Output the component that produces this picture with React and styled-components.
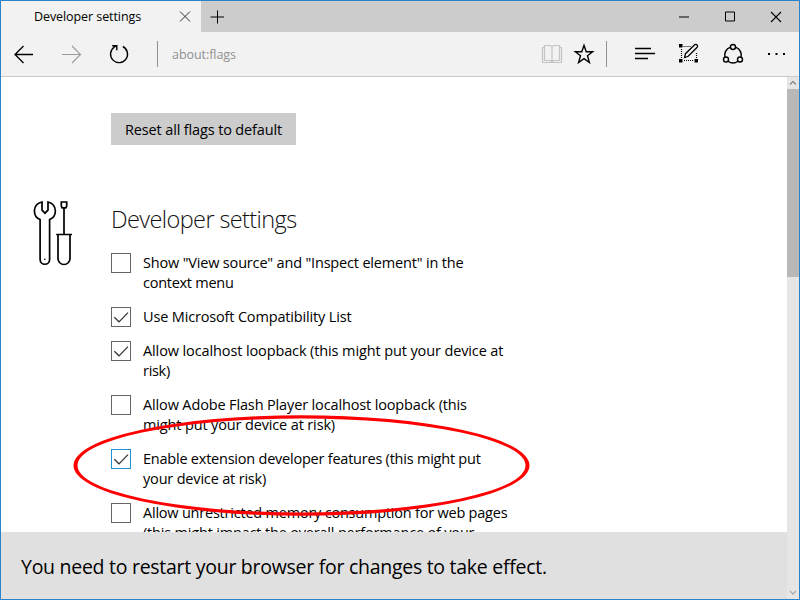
import React from 'react';
import styled, { createGlobalStyle } from 'styled-components';

const GlobalStyle = createGlobalStyle`
  * { box-sizing: border-box; }
  html, body { margin: 0; padding: 0; overflow: hidden; }
  body { font-family: "Open Sans", "Noto Sans", sans-serif; color: #000; }
`;

const Window = styled.div`
  position: relative;
  display: flex;
  flex-direction: column;
  width: 800px;
  height: 600px;
  border: 1px solid #2784cb;
  background: #fff;
`;

const TitleBar = styled.div`
  display: flex;
  flex: 0 0 31px;
  background: #ccc;
`;

const Tab = styled.div`
  display: flex;
  align-items: center;
  justify-content: space-between;
  width: 200px;
  padding: 0 5px 0 33px;
  background: #f2f2f2;
`;

const TabTitle = styled.span`
  font-size: 12.5px;
  line-height: 18px;
  letter-spacing: -0.08px;
  white-space: nowrap;
`;

const Icon = styled.svg`
  display: block;
  flex: none;
  width: ${(p) => p.$w || 24}px;
  height: ${(p) => p.$h || 24}px;
  margin-left: ${(p) => p.$gap || 0}px;
  fill: none;
  stroke: ${(p) => p.$color || '#000'};
  stroke-width: ${(p) => p.$stroke || 1};
`;

const NewTab = styled.div`
  display: flex;
  align-items: center;
  padding-left: 5px;
`;

const WindowControls = styled.div`
  display: flex;
  align-items: center;
  margin-left: auto;
  padding-right: 11px;
`;

const Toolbar = styled.div`
  display: flex;
  flex: 0 0 45px;
  align-items: center;
  padding: 0 10px 0 11px;
  border-bottom: 1px solid #c8c8c8;
  background: #f2f2f2;
`;

const Divider = styled.div`
  width: 1px;
  height: 26px;
  margin-left: ${(p) => p.$gap}px;
  background: #919191;
`;

const Address = styled.div`
  flex: 1;
  padding: 2px 0 0 14px;
  font-size: 12.5px;
  line-height: 18px;
  letter-spacing: -0.06px;
  color: #919191;
`;

const Body = styled.div`
  display: flex;
  flex: 1;
  min-height: 0;
`;

const Viewport = styled.main`
  position: relative;
  display: flex;
  flex-direction: column;
  width: 786px;
  overflow: hidden;
`;

const Page = styled.div`
  flex: 1;
  min-height: 0;
  overflow: hidden;
  padding: 36px 0 0 110px;
`;

const ResetButton = styled.button`
  display: block;
  width: 185px;
  height: 32px;
  padding: 2px 0 0 14px;
  border: 0;
  background: #ccc;
  font: 14.5px/30px "Open Sans", "Noto Sans", sans-serif;
  letter-spacing: -0.14px;
  text-align: left;
  white-space: nowrap;
  color: #000;
`;

const Section = styled.section`
  display: flex;
  margin: 53px 0 0 -80px;
`;

const Settings = styled.div`
  width: 420px;
  margin-left: 32px;
`;

const Heading = styled.h1`
  margin: 4px 0 0;
  font-size: 23.5px;
  font-weight: 300;
  line-height: 34px;
  letter-spacing: -0.6px;
  color: #111;
`;

const FlagList = styled.div`
  display: flex;
  flex-direction: column;
  gap: 14px;
  margin-top: 17px;
`;

const Flag = styled.label`
  display: flex;
  align-items: flex-start;
  gap: 12px;
`;

const Checkbox = styled.span`
  display: flex;
  flex: none;
  width: 20px;
  height: 20px;
  border: 1px solid ${(p) => (p.$focused ? '#1e91d0' : '#666')};
`;

const FlagText = styled.span`
  display: flex;
  flex-direction: column;
`;

const Line = styled.span`
  height: 20px;
  font-size: 14.5px;
  line-height: 20px;
  letter-spacing: ${(p) => p.$tracking}px;
  white-space: nowrap;
`;

const Notice = styled.div`
  flex: 0 0 67px;
  padding: 2px 0 0 20px;
  background: #e0e0e0;
  font-size: 19.5px;
  line-height: 65px;
  letter-spacing: -0.275px;
  white-space: nowrap;
`;

const Scrollbar = styled.div`
  display: flex;
  flex-direction: column;
  width: 12px;
  background: #e6e6e6;
`;

const Thumb = styled.div`
  height: 188px;
  background: #b8b8b8;
`;

const ScrollSpace = styled.div`
  flex: 1;
`;

const Highlight = styled.svg`
  position: absolute;
  left: 71px;
  top: 413px;
  width: 460px;
  height: 104px;
  fill: #f00;
  pointer-events: none;
`;

const FLAGS = [
  { lines: [['Show "View source" and "Inspect element" in the', -0.175], ['context menu', -0.27]] },
  { checked: true, lines: [['Use Microsoft Compatibility List', -0.16]] },
  { checked: true, lines: [['Allow localhost loopback (this might put your device at', -0.115], ['risk)', -0.3]] },
  { lines: [['Allow Adobe Flash Player localhost loopback (this', -0.14], ['might put your device at risk)', -0.14]] },
  { checked: true, focused: true, lines: [['Enable extension developer features (this might put', -0.225], ['your device at risk)', -0.18]] },
  { lines: [['Allow unrestricted memory consumption for web pages', -0.215], ['(this might impact the overall performance of your', -0.18]] },
];

const CheckMark = () => (
  <Icon $w={18} $h={18} $color="#333" $stroke={1.2} viewBox="0 0 18 18">
    <path d="M2.3 9.3 7 13.8 16 4.7" />
  </Icon>
);

const Tools = () => (
  <Icon $w={48} $h={70} $stroke={1.7} viewBox="30.500 198 48 70">
    <path d="M41.500 202C31.500 204.500 32 216.500 39.600 219.500V259.500A4.750 4.750 0 0 0 49.100 259.500V219.500C57 216.500 57 204.500 47.500 202V210.200L44.500 213.200 41.500 210.200Z" />
    <path d="M60.800 202H66.200V206L65.300 207.800H61.700L60.800 206ZM63.500 208V234M55.700 234.500H71.500M57.500 235V258.500A6 6 0 0 0 69.500 258.500V235" />
    <circle cx="44.300" cy="259.300" r=".8" fill="#000" stroke="none" />
  </Icon>
);

export default function App() {
  return (
    <>
      <GlobalStyle />
      <Window>
        <TitleBar>
          <Tab>
            <TabTitle>Developer settings</TabTitle>
            <Icon $color="#333" viewBox="0 0 24 24"><path d="M8 6.500 18 16.500M18 6.500 8 16.500" /></Icon>
          </Tab>
          <NewTab>
            <Icon viewBox="0 0 24 24"><path d="M4.500 12H18M11.500 5.500V18.500" /></Icon>
          </NewTab>
          <WindowControls>
            <Icon viewBox="0 0 24 24"><path d="M7 12H17" /></Icon>
            <Icon $gap={22} viewBox="0 0 24 24"><path d="M7.500 7H16.500V16H7.500Z" /></Icon>
            <Icon $gap={22} $stroke={1.1} viewBox="0 0 24 24"><path d="M7 7 17 17M17 7 7 17" /></Icon>
          </WindowControls>
        </TitleBar>
        <Toolbar>
          <Icon $stroke={1.3} viewBox="0 0 24 24"><path d="M21 12.500H2.500M11.500 4 3 12.500 11.500 21" /></Icon>
          <Icon $gap={24} $color="#999" $stroke={1.1} viewBox="0 0 24 24"><path d="M2 12.500H20.500M12 4 20.500 12.500 12 21" /></Icon>
          <Icon $gap={23} $stroke={1.4} viewBox="0 0 24 24">
            <path d="M15.800 4.500A8.500 8.500 0 1 1 7.100 5.200L9.700 3.700M5.200 3.700H9.800V8.300" />
          </Icon>
          <Divider $gap={26} />
          <Address>about:flags</Address>
          <Icon $color="#c4c4c4" $stroke={1.2} viewBox="0 0 24 24">
            <path d="M4.500 3.500H10.500L12 5 13.500 3.500H19.500V18.500H13.500L12 20 10.500 18.500H4.500ZM12 5V20M4.500 5.500H2.500V20.500H21.500V5.500H19.500" />
          </Icon>
          <Icon $gap={8} $stroke={1.4} viewBox="0 0 24 24">
            <path d="M12 3.300 14.200 9.700H20.700L15.500 13.800 17.400 20.500 12 16.600 6.600 20.500 8.500 13.800 3.300 9.700H9.800Z" />
          </Icon>
          <Divider $gap={10} />
          <Icon $gap={26} $stroke={1.3} viewBox="0 0 24 24"><path d="M2 6.500H18M2 11.500H22M2 16.500H15" /></Icon>
          <Icon $gap={20} viewBox="0 0 24 24">
            <path d="M6.500 4.500H14M4.500 7V17M19.500 11V17M7 18.500H17" strokeWidth="1.200" strokeDasharray="1 1" />
            <path d="M2 2H5.500V5.500H2ZM2 17H5.500V20.500H2ZM17.500 17H21V20.500H17.500Z" fill="#000" stroke="none" />
            <path d="M7.600 15.500 8.500 11.700 17.900 2.600Q19.200 2 20.300 3.200 20.900 4.300 20.200 5.200L11.200 14.300Z" strokeWidth="1.300" />
          </Icon>
          <Icon $gap={20} $stroke={1.4} viewBox="0 0 24 24">
            <circle cx="12" cy="5" r="2.500" />
            <circle cx="5" cy="17.500" r="2.500" />
            <circle cx="19" cy="17.500" r="2.500" />
            <path d="M9.500 5.200Q2.700 8.200 4 15M14.500 5.200Q21.300 8.200 20 15M7 19.200Q12 22.800 17 19.200" />
          </Icon>
          <Icon $gap={20} viewBox="0 0 24 24">
            <path d="M3 11H5V13H3ZM10.500 11H12.500V13H10.500ZM18 11H20V13H18Z" fill="#000" stroke="none" />
          </Icon>
        </Toolbar>
        <Body>
          <Viewport>
            <Page>
              <ResetButton>Reset all flags to default</ResetButton>
              <Section>
                <Tools />
                <Settings>
                  <Heading>Developer settings</Heading>
                  <FlagList>
                    {FLAGS.map((flag) => (
                      <Flag key={flag.lines[0][0]}>
                        <Checkbox $focused={flag.focused}>{flag.checked && <CheckMark />}</Checkbox>
                        <FlagText>
                          {flag.lines.map(([text, tracking]) => (
                            <Line key={text} $tracking={tracking}>{text}</Line>
                          ))}
                        </FlagText>
                      </Flag>
                    ))}
                  </FlagList>
                </Settings>
              </Section>
            </Page>
            <Notice>You need to restart your browser for changes to take effect.</Notice>
          </Viewport>
          <Scrollbar>
            <Icon $w={12} $h={12} $color="#888" $stroke={1.3} viewBox="0 0 12 12"><path d="M3 7.500 6 4.500 9 7.500" /></Icon>
            <Thumb />
            <ScrollSpace />
            <Icon $w={12} $h={12} $color="#aaa" $stroke={1.3} viewBox="0 0 12 12"><path d="M3 4 6 7 9 4" /></Icon>
          </Scrollbar>
        </Body>
        <Highlight viewBox="72 414 460 104">
          <path fillRule="evenodd" d="M73.500 465.500A228 50.200 0 0 1 529.500 465.500A228 50.200 0 0 1 73.500 465.500ZM77.500 465.500A224 47 0 0 0 525.500 465.500A224 47 0 0 0 77.500 465.500Z" />
        </Highlight>
      </Window>
    </>
  );
}
